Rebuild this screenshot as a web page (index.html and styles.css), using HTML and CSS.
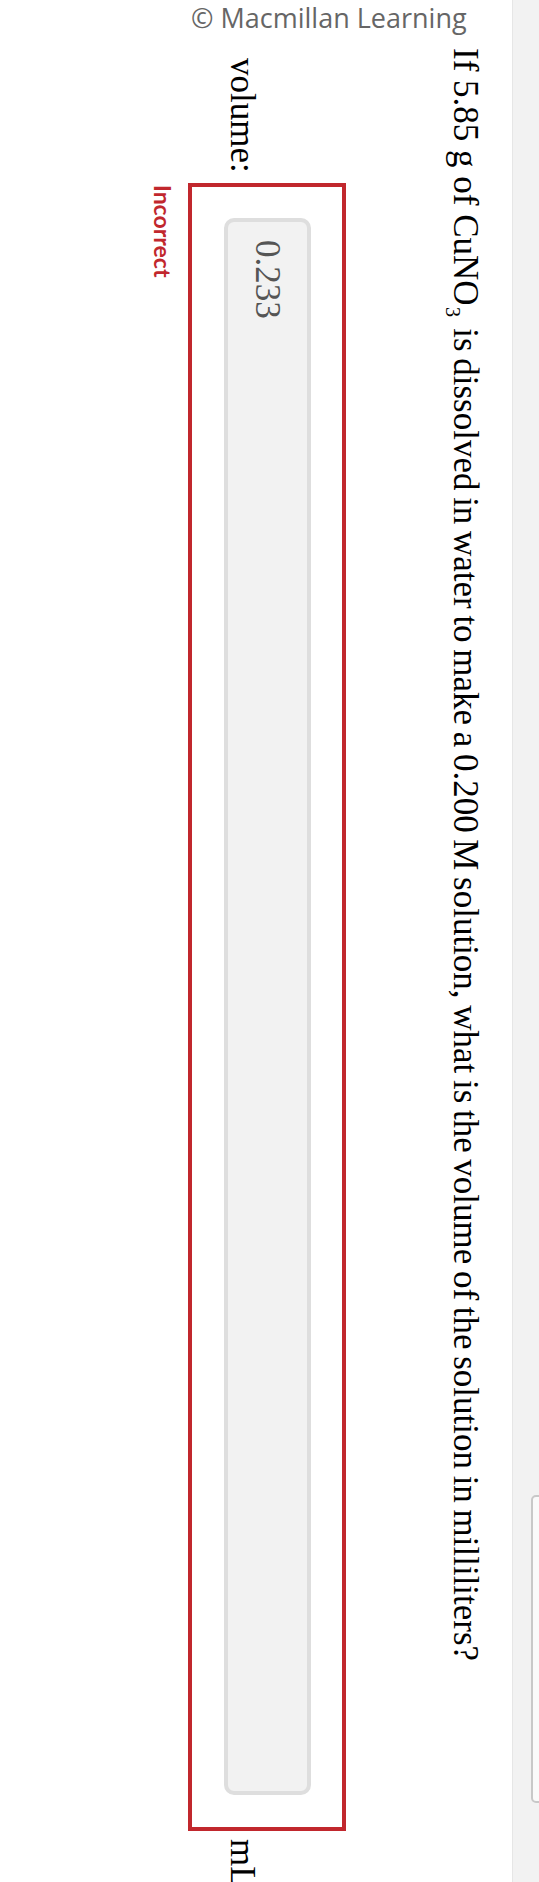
FILE: index.html
```html
<!DOCTYPE html>
<html lang="en">
<head>
<meta charset="utf-8">
<title>Question</title>
<link rel="stylesheet" href="styles.css">
</head>
<body>
<div class="page">
  <div class="toolbar"><div class="toolbar-button"></div></div>
  <div class="content">
    <p class="question"><span class="question-lead">If 5.85 g of </span>CuNO<sub>3</sub> is dissolved in water to make a 0.200 M solution, what is the volume of the solution in milliliters?</p>
    <div class="answer-row">
      <span class="answer-label">volume:</span>
      <div class="answer-box">
        <div class="answer-field" role="textbox" aria-readonly="true">0.233</div>
      </div>
      <span class="answer-unit">mL</span>
    </div>
    <div class="feedback">Incorrect</div>
  </div>
  <div class="copyright">© Macmillan Learning</div>
</div>
</body>
</html>
```
FILE: styles.css
```css
html, body {
  margin: 0;
  padding: 0;
  background: #fff;
}

.page {
  position: relative;
  width: 539px;
  height: 1882px;
  overflow: hidden;
  writing-mode: vertical-rl;
  font-family: "Liberation Serif", "Times New Roman", serif;
  color: #000;
}

.toolbar {
  block-size: 26px;
  border-block-end: 1px solid #e6e6e6;
  background: #f2f2f2;
  overflow: hidden;
}

.toolbar-button {
  box-sizing: border-box;
  block-size: 40px;
  inline-size: 308px;
  margin-block-start: -32px;
  margin-inline-start: 1495px;
  border: 2px solid #c8c8c8;
  border-radius: 5px;
  background: #fafafa;
}

.content {
  padding-block-start: 27px;
  padding-inline-start: 48px;
}

.question {
  margin-block: 0 99px;
  margin-inline: 0;
  font-size: 35px;
  line-height: 40px;
  word-spacing: -2.1px;
}

.question-lead {
  word-spacing: normal;
}

.question sub {
  font-size: 20px;
  line-height: 0;
  vertical-align: -12px;
  margin-inline-start: 1px;
  margin-inline-end: 5px;
}

.answer-row {
  display: flex;
  align-items: flex-start;
  margin-inline-start: 10px;
  font-size: 35px;
  line-height: 40px;
}

.answer-label {
  margin-block-start: 84px;
  margin-inline-end: 10px;
}

.answer-box {
  border: 4px solid #c1272d;
  padding: 31.5px;
}

.answer-field {
  box-sizing: border-box;
  inline-size: 1577px;
  block-size: 87px;
  padding-inline-start: 18px;
  border: 4px solid #dedede;
  border-radius: 10px;
  background: #f2f2f2;
  color: #555;
  font-size: 35px;
  line-height: 79px;
}

.answer-unit {
  margin-block-start: 84px;
  margin-inline-start: 8px;
}

.feedback {
  margin-block-start: 11px;
  margin-inline-start: 137px;
  font-family: Lato, "Open Sans", sans-serif;
  font-weight: 700;
  font-size: 23px;
  line-height: 28px;
  color: #c1272d;
}

.copyright {
  position: absolute;
  top: 0;
  left: 191px;
  writing-mode: horizontal-tb;
  font-family: "Open Sans", sans-serif;
  font-size: 27px;
  line-height: 36px;
  color: #666;
  white-space: nowrap;
}
```
